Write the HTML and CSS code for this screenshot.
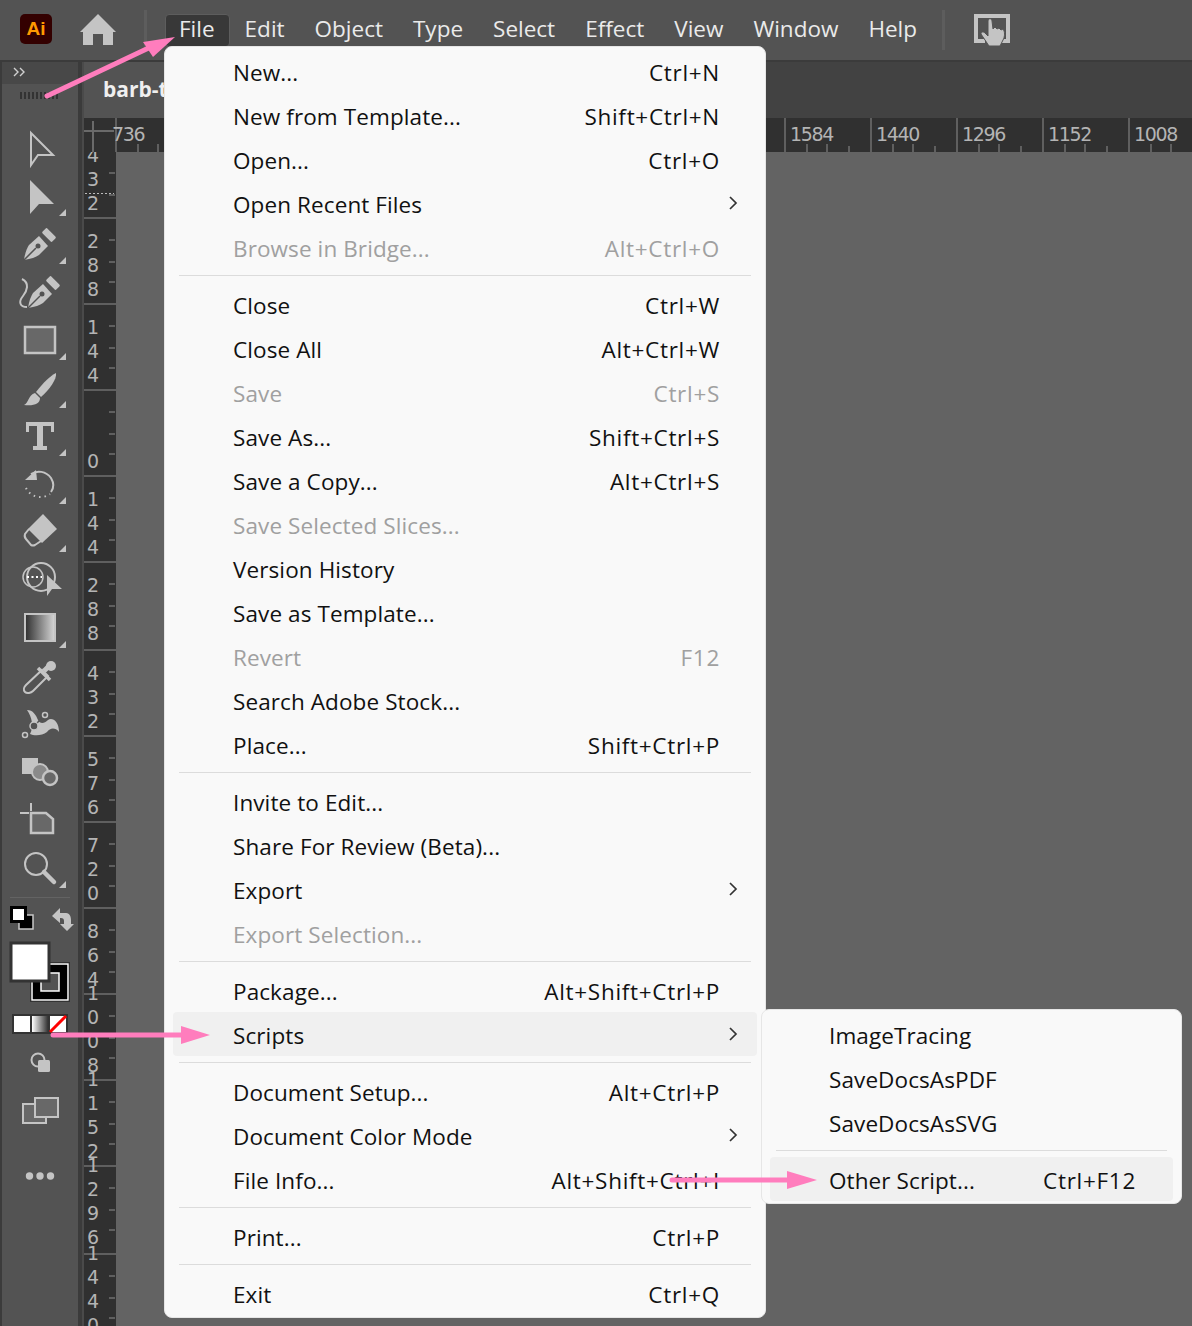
FILE: index.html
```html
<!DOCTYPE html>
<html lang="en">
<head>
    <meta charset="UTF-8">
    <title>Illustrator File menu</title>
    <link rel="stylesheet" href="styles.css">
</head>
<body>
<header id="topbar">
    <div class="ai-logo">Ai</div>
    <svg class="home" viewBox="0 0 36 32"><path d="M18 0L36 18H33V31H23V20H13V31H3V18H0Z"/></svg>
    <div class="bar-divider"></div>
    <nav id="menubar">
        <span class="bar-item active">File</span>
        <span class="bar-item">Edit</span>
        <span class="bar-item">Object</span>
        <span class="bar-item">Type</span>
        <span class="bar-item">Select</span>
        <span class="bar-item">Effect</span>
        <span class="bar-item">View</span>
        <span class="bar-item">Window</span>
        <span class="bar-item">Help</span>
    </nav>
    <div class="bar-divider"></div>
    <svg class="touch" viewBox="0 0 36 32">
        <path class="touch-frame" d="M11 27H2V2H34V27H26"/>
        <path class="touch-hand" d="M14 7C14 4 18 4 18 7L19 15L21 13L23 15L25 14L27 16L29 15C31 17 31 23 29 26L26 32H15L11 26L7 20C7 18 9 17 11 19L14 22Z"/>
    </svg>
</header>

<div id="workspace">
    <aside id="toolbar">
        <div class="panel-head">
            <svg viewBox="0 0 14 10"><path d="M2 1L6 5L2 9M8 1L12 5L8 9"/></svg>
        </div>
        <div class="grip"></div>

        <div class="tool"><svg viewBox="0 0 78 48"><polygon class="line" points="31,8 53,30 38,30 31,40"/></svg></div>
        <div class="tool more"><svg viewBox="0 0 78 48"><polygon class="solid" points="30,7 54,31 39,31 30,41"/></svg></div>
        <div class="tool more"><svg viewBox="0 0 78 48">
            <path class="solid" d="M24 39C25 32 27 27 29 24L39 15L48 25L39 34C36 36 31 38 24 39Z"/>
            <path class="cut" d="M24 39L36 27"/><circle class="hole" cx="38" cy="25" r="2.5"/>
            <rect class="solid" x="42" y="10.5" width="14" height="7" rx="1.5" transform="rotate(45 49 14)"/>
        </svg></div>
        <div class="tool"><svg viewBox="0 0 78 48">
            <path class="solid" d="M28 39C29 32 31 27 33 24L43 15L52 25L43 34C40 36 35 38 28 39Z"/>
            <path class="cut" d="M28 39L40 27"/><circle class="hole" cx="42" cy="25" r="2.5"/>
            <rect class="solid" x="46" y="10.5" width="14" height="7" rx="1.5" transform="rotate(45 53 14)"/>
            <path class="line" d="M22 10C30 14 27 22 23 27C18 33 20 38 27 38"/>
        </svg></div>
        <div class="tool more"><svg viewBox="0 0 78 48"><rect class="line filled" x="25" y="10" width="30" height="26"/></svg></div>
        <div class="tool more"><svg viewBox="0 0 78 48">
            <path class="solid" d="M56 8C57 14 50 24 41 32L36 27C43 18 50 11 56 8Z"/>
            <path class="solid" d="M35 28L40 33C40 39 34 41 24 40C29 38 28 30 35 28Z"/>
        </svg></div>
        <div class="tool more"><svg viewBox="0 0 78 48"><path class="solid" d="M26 9H54V19H51V13H43V33H47V37H33V33H37V13H29V19H26Z"/></svg></div>
        <div class="tool more"><svg viewBox="0 0 78 48">
            <path class="line" d="M31 13C37 9 46 10 51 17C54 22 54 27 51 31"/>
            <polygon class="solid" points="25,19 36,9 37,19"/>
            <path class="dots" d="M26 27C29 34 40 40 50 33"/>
        </svg></div>
        <div class="tool more"><svg viewBox="0 0 78 48">
            <polygon class="solid" points="43,5 57,20 42,34 28,20"/>
            <path class="line" d="M29 20L25 25Q24 28 26 30L31 36Q33 37 35 36L41 32"/>
        </svg></div>
        <div class="tool"><svg viewBox="0 0 78 48">
            <circle class="thin" cx="33" cy="20" r="10"/><circle class="line" cx="41" cy="20" r="14"/>
            <path class="dots light" d="M27 20H42"/>
            <polygon class="solid" points="47,18 62,32 52,32 47,39"/>
        </svg></div>
        <div class="tool more"><svg viewBox="0 0 78 48">
            <defs><linearGradient id="grad"><stop offset="0" stop-color="#2e2e2e"/><stop offset="1" stop-color="#d8d8d8"/></linearGradient></defs>
            <rect class="outline" x="25" y="9" width="30" height="27" fill="url(#grad)"/>
        </svg></div>
        <div class="tool"><svg viewBox="0 0 78 48">
            <path class="line" d="M25 39C23 37 24 34 26 32L42 17L48 23L33 38C31 40 27 41 25 39Z"/>
            <path class="line thick" d="M38 15L50 27"/>
            <circle class="solid" cx="51" cy="13" r="5"/>
            <path class="thick-line" d="M44 18L49 13"/>
        </svg></div>
        <div class="tool"><svg viewBox="0 0 78 48">
            <path class="solid" d="M27 9C33 9 36 14 38 19C40 23 44 23 48 19C52 16 59 20 59 31C55 26 50 27 47 31C42 35 34 35 30 33C34 26 32 16 27 9Z"/>
            <path class="dark-line" d="M25 34L45 14"/>
            <circle class="node" cx="25" cy="34" r="2.5"/><circle class="node" cx="45" cy="14" r="2.5"/><circle class="node" cx="34" cy="25" r="4"/>
        </svg></div>
        <div class="tool"><svg viewBox="0 0 78 48">
            <rect class="solid" x="22" y="9" width="16" height="16"/>
            <circle class="line grey" cx="40" cy="23" r="8"/>
            <circle class="line filled" cx="50" cy="29" r="7"/>
        </svg></div>
        <div class="tool"><svg viewBox="0 0 78 48">
            <path class="line" d="M20 16H29M31 6V14"/>
            <path class="line filled" d="M31 16H46L53 22V36H31Z"/>
        </svg></div>
        <div class="tool more"><svg viewBox="0 0 78 48">
            <circle class="line" cx="36" cy="19" r="11"/>
            <path class="line handle" d="M44 27L54 37"/>
        </svg></div>

        <div class="tool-divider"></div>

        <svg class="tool-foot" viewBox="0 0 78 290">
            <defs>
                <linearGradient id="mode"><stop offset="0" stop-color="#fff"/><stop offset="1" stop-color="#333"/></linearGradient>
            </defs>
            <rect x="19" y="17" width="14" height="14" fill="#000" stroke="#c8c8c8" stroke-width="1.5"/>
            <rect x="11.5" y="9.5" width="14" height="14" fill="#fff" stroke="#000" stroke-width="3"/>
            <path class="swap" d="M52 18L60 10V15H66C70 15 71 19 71 22V26H74L67 33L60 26H64V23C64 21 63 20 61 20H60V25Z"/>
            <rect x="30.5" y="64.5" width="39" height="39" fill="#000" stroke="#333"/>
            <rect x="32" y="66" width="36" height="36" fill="none" stroke="#fff" stroke-width="1.5"/>
            <rect x="41" y="75" width="18" height="18" fill="#535353" stroke="#fff" stroke-width="1.5"/>
            <rect x="11" y="45" width="38" height="38" fill="#fff" stroke="#333" stroke-width="3"/>
            <rect x="12" y="116" width="56" height="20" fill="#333"/>
            <rect x="14" y="118" width="16" height="16" fill="#fff"/>
            <rect x="32" y="118" width="16" height="16" fill="url(#mode)"/>
            <rect x="50" y="118" width="16" height="16" fill="#fff"/>
            <path d="M50 134L66 118" stroke="#f00" stroke-width="3"/>
            <circle cx="38" cy="162" r="6.5" fill="none" stroke="#c4c4c4" stroke-width="2"/>
            <rect x="38" y="162" width="12" height="12" rx="1.5" fill="#c4c4c4"/>
            <rect class="mode-rect" x="23" y="206" width="23" height="19"/>
            <rect class="mode-rect" x="35" y="200" width="23" height="19"/>
            <circle cx="29.5" cy="278" r="3.7" fill="#c4c4c4"/>
            <circle cx="40" cy="278" r="3.7" fill="#c4c4c4"/>
            <circle cx="50.5" cy="278" r="3.7" fill="#c4c4c4"/>
        </svg>
    </aside>

    <main id="document">
        <div class="tabstrip"><div class="tab">barb-tutorial</div></div>
        <div class="hruler">
            <div class="ruler-corner"></div>
            <div class="hseg clipped">736</div>
            <div class="hruler-gap"></div>
            <div class="hseg">1584</div>
            <div class="hseg">1440</div>
            <div class="hseg">1296</div>
            <div class="hseg">1152</div>
            <div class="hseg">1008</div>
        </div>
        <div class="stage">
            <div class="vruler">
                <div class="vseg first"><div class="guide"></div>4<br>3<br>2</div>
                <div class="vseg">2<br>8<br>8</div>
                <div class="vseg">1<br>4<br>4</div>
                <div class="vseg">&nbsp;<br>&nbsp;<br>0</div>
                <div class="vseg">1<br>4<br>4</div>
                <div class="vseg wide">2<br>8<br>8</div>
                <div class="vseg">4<br>3<br>2</div>
                <div class="vseg">5<br>7<br>6</div>
                <div class="vseg">7<br>2<br>0</div>
                <div class="vseg">8<br>6<br>4</div>
                <div class="vseg up">1<br>0<br>0<br>8</div>
                <div class="vseg up">1<br>1<br>5<br>2</div>
                <div class="vseg up wide">1<br>2<br>9<br>6</div>
                <div class="vseg up">1<br>4<br>4<br>0</div>
            </div>
            <div class="canvas"></div>
        </div>
    </main>
</div>

<div id="file-menu" class="menu">
    <div class="item"><span class="label">New...</span><span class="key">Ctrl+N</span><span class="chev"></span></div>
    <div class="item"><span class="label">New from Template...</span><span class="key">Shift+Ctrl+N</span><span class="chev"></span></div>
    <div class="item"><span class="label">Open...</span><span class="key">Ctrl+O</span><span class="chev"></span></div>
    <div class="item"><span class="label">Open Recent Files</span><span class="chev"><svg viewBox="0 0 10 16"><path d="M2 2L8 8L2 14"/></svg></span></div>
    <div class="item off"><span class="label">Browse in Bridge...</span><span class="key">Alt+Ctrl+O</span><span class="chev"></span></div>
    <div class="sep"></div>
    <div class="item"><span class="label">Close</span><span class="key">Ctrl+W</span><span class="chev"></span></div>
    <div class="item"><span class="label">Close All</span><span class="key">Alt+Ctrl+W</span><span class="chev"></span></div>
    <div class="item off"><span class="label">Save</span><span class="key">Ctrl+S</span><span class="chev"></span></div>
    <div class="item"><span class="label">Save As...</span><span class="key">Shift+Ctrl+S</span><span class="chev"></span></div>
    <div class="item"><span class="label">Save a Copy...</span><span class="key">Alt+Ctrl+S</span><span class="chev"></span></div>
    <div class="item off"><span class="label">Save Selected Slices...</span><span class="chev"></span></div>
    <div class="item"><span class="label">Version History</span><span class="chev"></span></div>
    <div class="item"><span class="label">Save as Template...</span><span class="chev"></span></div>
    <div class="item off"><span class="label">Revert</span><span class="key">F12</span><span class="chev"></span></div>
    <div class="item"><span class="label">Search Adobe Stock...</span><span class="chev"></span></div>
    <div class="item"><span class="label">Place...</span><span class="key">Shift+Ctrl+P</span><span class="chev"></span></div>
    <div class="sep"></div>
    <div class="item"><span class="label">Invite to Edit...</span><span class="chev"></span></div>
    <div class="item"><span class="label">Share For Review (Beta)...</span><span class="chev"></span></div>
    <div class="item"><span class="label">Export</span><span class="chev"><svg viewBox="0 0 10 16"><path d="M2 2L8 8L2 14"/></svg></span></div>
    <div class="item off"><span class="label">Export Selection...</span><span class="chev"></span></div>
    <div class="sep"></div>
    <div class="item"><span class="label">Package...</span><span class="key">Alt+Shift+Ctrl+P</span><span class="chev"></span></div>
    <div class="item hover"><span class="label">Scripts</span><span class="chev"><svg viewBox="0 0 10 16"><path d="M2 2L8 8L2 14"/></svg></span></div>
    <div class="sep"></div>
    <div class="item"><span class="label">Document Setup...</span><span class="key">Alt+Ctrl+P</span><span class="chev"></span></div>
    <div class="item"><span class="label">Document Color Mode</span><span class="chev"><svg viewBox="0 0 10 16"><path d="M2 2L8 8L2 14"/></svg></span></div>
    <div class="item"><span class="label">File Info...</span><span class="key">Alt+Shift+Ctrl+I</span><span class="chev"></span></div>
    <div class="sep"></div>
    <div class="item"><span class="label">Print...</span><span class="key">Ctrl+P</span><span class="chev"></span></div>
    <div class="sep"></div>
    <div class="item"><span class="label">Exit</span><span class="key">Ctrl+Q</span><span class="chev"></span></div>
</div>

<div id="scripts-menu" class="menu">
    <div class="item"><span class="label">ImageTracing</span><span class="chev"></span></div>
    <div class="item"><span class="label">SaveDocsAsPDF</span><span class="chev"></span></div>
    <div class="item"><span class="label">SaveDocsAsSVG</span><span class="chev"></span></div>
    <div class="sep"></div>
    <div class="item hover"><span class="label">Other Script...</span><span class="key">Ctrl+F12</span><span class="chev"></span></div>
</div>

<!-- pink annotation arrows -->
<svg id="arrows" viewBox="0 0 1192 1326">
    <path d="M47 96L155 45"/>
    <polygon points="175,37 143,42 153,57"/>
    <path d="M53 1035H185"/>
    <polygon points="210,1035 181,1026 181,1044"/>
    <path d="M672 1180H790"/>
    <polygon points="817,1180 787,1171 787,1189"/>
</svg>
</body>
</html>
```

FILE: styles.css
```css
:root {
    --panel: #535353;
    --panel-dark: #3b3b3b;
    --ruler: #303030;
    --ruler-line: #5f5f5f;
    --ruler-text: #b4b4b4;
    --icon: #c4c4c4;
    --pink: #ff7dbd;
}

* {
    box-sizing: border-box;
}

html, body {
    height: 100%;
}

body {
    margin: 0;
    position: relative;
    overflow: hidden;
    display: flex;
    flex-direction: column;
    background-color: #636363;
    font-family: 'Open Sans', sans-serif;
}

/* top bar */
#topbar {
    flex: none;
    height: 62px;
    display: flex;
    align-items: center;
    background-color: var(--panel);
    border-bottom: 2px solid var(--panel-dark);
    padding-left: 20px;
}

.ai-logo {
    width: 32px;
    height: 30px;
    border-radius: 5px;
    background-color: #330000;
    color: #ff9a00;
    font-family: 'Liberation Sans', sans-serif;
    font-weight: bold;
    font-size: 19px;
    line-height: 30px;
    text-align: center;
    margin-top: -2px;
}

.home {
    width: 36px;
    height: 32px;
    margin: 0 28px;
    fill: var(--icon);
}

.bar-divider {
    width: 3px;
    height: 40px;
    background-color: #5d5d5d;
}

#menubar {
    display: flex;
    align-items: center;
    margin: 0 10px 0 18px;
    color: #eaeaea;
    font-size: 22.5px;
}

.bar-item {
    padding: 0 14px;
    height: 33px;
    line-height: 27px;
    border: 1px solid transparent;
    border-radius: 4px;
}

.bar-item.active {
    padding-left: 13px;
    background-color: #383838;
    border-color: #5d5d5d;
}

.touch {
    width: 36px;
    height: 32px;
    margin-left: 29px;
}

.touch-frame {
    fill: none;
    stroke: var(--icon);
    stroke-width: 4;
}

.touch-hand {
    fill: var(--icon);
    stroke: var(--panel);
    stroke-width: 1;
}

/* workspace */
#workspace {
    flex: 1;
    display: flex;
    min-height: 0;
}

#toolbar {
    flex: none;
    width: 82px;
    background-color: var(--panel);
    border-left: 2px solid var(--panel-dark);
    border-right: 4px solid var(--panel-dark);
}

.panel-head {
    height: 22px;
    background-color: #484848;
    padding: 5px 0 0 10px;
}

.panel-head svg {
    display: block;
    width: 14px;
    height: 10px;
    fill: none;
    stroke: #d0d0d0;
    stroke-width: 1.4;
}

.grip {
    width: 38px;
    height: 7px;
    margin: 8px 0 0 18px;
    background: repeating-linear-gradient(90deg, #333 0 2px, transparent 2px 4px);
}

.tool {
    position: relative;
    height: 48px;
    margin-left: -2px;
}

.grip + .tool {
    margin-top: 26px;
}

.tool svg {
    display: block;
    width: 78px;
    height: 48px;
}

.tool.more::after {
    content: "";
    position: absolute;
    right: 12px;
    bottom: 5px;
    border-style: solid;
    border-width: 0 0 7px 7px;
    border-color: transparent transparent var(--icon) transparent;
}

.solid {
    fill: var(--icon);
}

.line {
    fill: none;
    stroke: var(--icon);
    stroke-width: 2;
}

.outline {
    stroke: var(--icon);
    stroke-width: 2;
}

.line.filled {
    fill: #686868;
    stroke-width: 2.5;
}

.line.grey {
    fill: #8a8a8a;
}

.line.thick {
    stroke-width: 3.5;
}

.line.handle {
    stroke-width: 4.5;
    stroke-linecap: round;
}

.thin {
    fill: none;
    stroke: var(--icon);
    stroke-width: 1.5;
}

.cut {
    fill: none;
    stroke: var(--panel);
    stroke-width: 1.5;
}

.hole {
    fill: var(--panel);
}

.dots {
    fill: none;
    stroke: var(--icon);
    stroke-width: 2;
    stroke-dasharray: 1.5 4;
}

.dots.light {
    stroke: #fff;
    stroke-dasharray: 2 2.5;
}

.thick-line {
    stroke: var(--icon);
    stroke-width: 5;
}

.dark-line {
    stroke: var(--panel);
    stroke-width: 1.5;
}

.node {
    fill: var(--panel);
    stroke: var(--icon);
    stroke-width: 1.5;
}

.tool-divider {
    height: 1px;
    margin: 4px 0 0 8px;
    width: 60px;
    background-color: #636363;
}

.tool-foot {
    display: block;
    width: 78px;
    height: 290px;
    margin-left: -2px;
}

.swap {
    fill: var(--icon);
}

.mode-rect {
    fill: #686868;
    stroke: var(--icon);
    stroke-width: 2;
}

/* document area */
#document {
    flex: 1;
    min-width: 0;
    display: flex;
    flex-direction: column;
    border-left: 2px solid #4a4a4a;
}

.tabstrip {
    flex: none;
    height: 56px;
    background-color: #424242;
}

.tab {
    width: 240px;
    height: 56px;
    padding-left: 19px;
    background-color: var(--panel);
    color: #efefef;
    font-size: 21px;
    font-weight: 700;
    line-height: 54px;
    white-space: nowrap;
}

.hruler {
    flex: none;
    height: 34px;
    display: flex;
    background-color: var(--ruler);
    color: var(--ruler-text);
    font-family: 'DejaVu Sans', sans-serif;
    font-size: 19px;
    letter-spacing: -1.3px;
}

.ruler-corner {
    flex: none;
    width: 31px;
    background:
        linear-gradient(#6a6a6a, #6a6a6a) 0 12px / 30px 2px no-repeat,
        linear-gradient(#6a6a6a, #6a6a6a) 8px 3px / 2px 31px no-repeat;
}

.hruler-gap {
    flex: none;
    width: 583px;
}

.hseg {
    flex: none;
    width: 86px;
    padding-left: 4px;
    line-height: 32px;
    border-left: 2px solid var(--ruler-line);
    background:
        linear-gradient(var(--ruler-line), var(--ruler-line)) 20px 100% / 2px 8px no-repeat,
        linear-gradient(var(--ruler-line), var(--ruler-line)) 40px 100% / 2px 8px no-repeat,
        linear-gradient(var(--ruler-line), var(--ruler-line)) 62px 100% / 2px 6px no-repeat;
}

.hseg.clipped {
    padding-left: 0;
    text-indent: -5px;
}

.stage {
    flex: 1;
    min-height: 0;
    display: flex;
}

.vruler {
    flex: none;
    width: 32px;
    display: flex;
    flex-direction: column;
    overflow: hidden;
    background-color: var(--ruler);
    color: var(--ruler-text);
    font-family: 'DejaVu Sans', sans-serif;
    font-size: 19px;
    line-height: 24px;
}

.vseg {
    flex: none;
    position: relative;
    height: 86px;
    padding: 10px 14px 0 0;
    text-align: center;
    border-top: 2px solid var(--ruler-line);
    background:
        linear-gradient(var(--ruler-line), var(--ruler-line)) right 1px top 20px / 6px 2px no-repeat,
        linear-gradient(var(--ruler-line), var(--ruler-line)) right 1px top 42px / 6px 2px no-repeat,
        linear-gradient(var(--ruler-line), var(--ruler-line)) right 1px top 62px / 6px 2px no-repeat;
}

.vseg.first {
    height: 65px;
    padding-top: 0;
    border-top: none;
    background:
        linear-gradient(var(--ruler-line), var(--ruler-line)) right 1px top 20px / 6px 2px no-repeat,
        linear-gradient(var(--ruler-line), var(--ruler-line)) right 1px top 42px / 6px 2px no-repeat;
}

.vseg.first::before {
    content: "";
    display: block;
    margin-top: -9px;
}

.vseg.wide {
    height: 88px;
}

.vseg.up {
    padding-top: 0;
}

.vseg.up::before {
    content: "";
    display: block;
    margin-top: -14px;
}

.guide {
    position: absolute;
    left: 1px;
    right: 2px;
    top: 41px;
    height: 1px;
    background: repeating-linear-gradient(90deg, #bbb 0 2px, transparent 2px 4px);
}

.canvas {
    flex: 1;
    background-color: #636363;
}

/* menus */
.menu {
    position: absolute;
    background-color: #f9f9f9;
    border: 1px solid #e6e6e6;
    border-radius: 8px;
    color: #111;
    font-size: 22.5px;
    padding-top: 2px;
}

#file-menu {
    left: 164px;
    top: 46px;
    width: 602px;
    height: 1272px;
}

#scripts-menu {
    left: 761px;
    top: 1009px;
    width: 421px;
    height: 195px;
}

.item {
    display: flex;
    align-items: center;
    height: 44px;
    margin: 0 8px;
    padding-top: 3px;
    border-radius: 4px;
    white-space: nowrap;
}

.item.hover {
    background-color: #f0f0f0;
}

.item.off {
    color: #a0a0a0;
}

.label {
    flex: 1;
    padding-left: 60px;
    letter-spacing: 0.1px;
}

#scripts-menu .label {
    padding-left: 59px;
}

.key {
    letter-spacing: 0.7px;
}

.chev {
    flex: none;
    width: 37px;
    height: 16px;
    padding-left: 8px;
}

.chev svg {
    display: block;
    width: 10px;
    height: 16px;
    margin-top: -2px;
    fill: none;
    stroke: #333;
    stroke-width: 1.7;
}

.sep {
    height: 1px;
    margin: 6px 14px;
    background-color: #dcdcdc;
}

#arrows {
    position: absolute;
    left: 0;
    top: 0;
    width: 1192px;
    height: 1326px;
    pointer-events: none;
}

#arrows path {
    fill: none;
    stroke: var(--pink);
    stroke-width: 5;
    stroke-linecap: round;
}

#arrows polygon {
    fill: var(--pink);
}
```
